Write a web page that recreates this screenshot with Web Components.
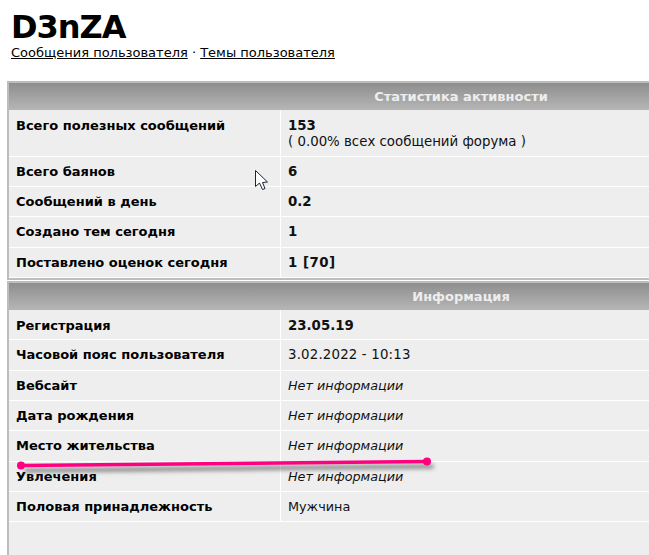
<!DOCTYPE html>
<html>
<head>
<meta charset="utf-8">
<style>
  html, body { margin: 0; height: 555px; overflow: hidden; background: #fff; }
  body { font: 13.33px "DejaVu Sans", Verdana, sans-serif; color: #111; position: relative; }
  i { font-size: 12.8px; }
  .date { letter-spacing: .18px; }
  .sex { font-size: 12.8px; }
  .rate { letter-spacing: .5px; }
</style>
</head>
<body>
<profile-page>
  <profile-head slot="head" name="D3nZA"></profile-head>

  <stat-table heading="Статистика активности" style="--row-h: 30.2px">
    <stat-row label="Всего полезных сообщений" tall><b>153</b><br>( 0.00% всех сообщений форума )</stat-row>
    <stat-row label="Всего баянов"><b>6</b></stat-row>
    <stat-row label="Сообщений в день"><b>0.2</b></stat-row>
    <stat-row label="Создано тем сегодня"><b>1</b></stat-row>
    <stat-row label="Поставлено оценок сегодня"><b class="rate">1 [70]</b></stat-row>
  </stat-table>

  <stat-table heading="Информация" open-end style="--row-h: 30.4px">
    <stat-row label="Регистрация" low><b>23.05.19</b></stat-row>
    <stat-row label="Часовой пояс пользователя"><span class="date">3.02.2022 - 10:13</span></stat-row>
    <stat-row label="Вебсайт"><i>Нет информации</i></stat-row>
    <stat-row label="Дата рождения"><i>Нет информации</i></stat-row>
    <stat-row label="Место жительства"><i>Нет информации</i></stat-row>
    <stat-row label="Увлечения"><i>Нет информации</i></stat-row>
    <stat-row label="Половая принадлежность"><span class="sex">Мужчина</span></stat-row>
  </stat-table>
</profile-page>
<screen-marks></screen-marks>

<script>
customElements.define("profile-page", class extends HTMLElement {
  constructor() {
    super();
    this.attachShadow({ mode: "open" }).innerHTML = `
      <style>
        :host { display: flex; flex-direction: column; padding-left: 7px; overflow: hidden; }
        .tables { display: flex; flex-direction: column; gap: 1px; margin-top: 20px; }
      </style>
      <slot name="head"></slot>
      <div class="tables"><slot></slot></div>
    `;
  }
});

customElements.define("profile-head", class extends HTMLElement {
  constructor() {
    super();
    this.attachShadow({ mode: "open" }).innerHTML = `
      <style>
        :host { display: block; padding: 9px 0 0 4px; }
        h1 { margin: 0; font-size: 32px; line-height: 36px; color: #000; letter-spacing: -1px; }
        nav { line-height: 16px; color: #000; font-size: 13px; }
        a { color: #000; text-decoration: underline; }
      </style>
      <h1></h1>
      <nav><a href="#">Сообщения пользователя</a> · <a href="#">Темы пользователя</a></nav>
    `;
    this.shadowRoot.querySelector("h1").textContent = this.getAttribute("name");
  }
});

// the real forum table is wider than the window, so the heading stays centred on its full width
customElements.define("stat-table", class extends HTMLElement {
  constructor() {
    super();
    this.attachShadow({ mode: "open" }).innerHTML = `
      <style>
        :host { display: block; border: 2px solid #bdbdbd; border-right: 0; }
        :host([open-end]) { border-bottom: 0; height: 275px; background: #eee; }
        header {
          height: 27px; line-height: 27px; padding-left: 264px; text-align: center;
          font-weight: bold; font-size: 13px; color: #eee;
          background: linear-gradient(#8e8e8e, #b6b6b6);
        }
      </style>
      <header></header>
      <slot></slot>
    `;
    this.shadowRoot.querySelector("header").textContent = this.getAttribute("heading");
  }
});

customElements.define("stat-row", class extends HTMLElement {
  constructor() {
    super();
    this.attachShadow({ mode: "open" }).innerHTML = `
      <style>
        :host {
          display: grid; grid-template-columns: 272px 1fr; height: var(--row-h, 30.33px); box-sizing: border-box;
          background: #eee; border-bottom: 1px solid #fff; line-height: 16px;
        }
        :host([tall]) { height: 47px; }
        .label { padding: 7px 7px 0; font-weight: bold; font-size: 13px; color: #000; border-right: 1px solid #fff; }
        .value { padding: 7px 7px 0; }
        :host([tall]) .label, :host([tall]) .value, :host([low]) .label, :host([low]) .value { padding-top: 8px; }
      </style>
      <div class="label"></div>
      <div class="value"><slot></slot></div>
    `;
    this.shadowRoot.querySelector(".label").textContent = this.getAttribute("label");
  }
});

// the hand drawn marker stroke and the mouse pointer lie over the screenshot
customElements.define("screen-marks", class extends HTMLElement {
  constructor() {
    super();
    this.attachShadow({ mode: "open" }).innerHTML = `
      <style>
        :host { position: absolute; inset: 0; pointer-events: none; }
        svg { position: absolute; left: 0; top: 0; }
      </style>
      <svg width="649" height="555">
        <defs>
          <filter id="soft" x="-5%" y="-300%" width="110%" height="700%"><feGaussianBlur stdDeviation="2"/></filter>
        </defs>
        <path d="M21 465.5 L427 461.5" stroke="#555" stroke-opacity=".7" stroke-width="4" stroke-linecap="round" fill="none" transform="translate(5 5)" filter="url(#soft)"/>
        <path d="M21 465.5 L427 461.5" stroke="#ff0080" stroke-width="3.5" fill="none"/>
        <circle cx="21" cy="465.5" r="4" fill="#ff0080"/>
        <circle cx="427" cy="461.5" r="4" fill="#ff0080"/>
        <path d="M255.5 170.5 V186.5 L259.5 183 L262.5 189.5 L265 188.5 L262.5 182.5 L267.5 182 Z" fill="#fff" stroke="#1c2430" stroke-width="1"/>
      </svg>
    `;
  }
});
</script>
</body>
</html>
